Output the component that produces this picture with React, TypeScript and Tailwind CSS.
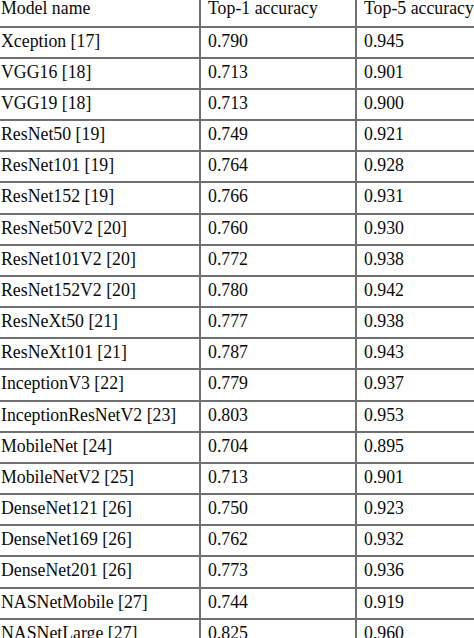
const rows: [string, string, string][] = [
  ["Xception [17]", "0.790", "0.945"],
  ["VGG16 [18]", "0.713", "0.901"],
  ["VGG19 [18]", "0.713", "0.900"],
  ["ResNet50 [19]", "0.749", "0.921"],
  ["ResNet101 [19]", "0.764", "0.928"],
  ["ResNet152 [19]", "0.766", "0.931"],
  ["ResNet50V2 [20]", "0.760", "0.930"],
  ["ResNet101V2 [20]", "0.772", "0.938"],
  ["ResNet152V2 [20]", "0.780", "0.942"],
  ["ResNeXt50 [21]", "0.777", "0.938"],
  ["ResNeXt101 [21]", "0.787", "0.943"],
  ["InceptionV3 [22]", "0.779", "0.937"],
  ["InceptionResNetV2 [23]", "0.803", "0.953"],
  ["MobileNet [24]", "0.704", "0.895"],
  ["MobileNetV2 [25]", "0.713", "0.901"],
  ["DenseNet121 [26]", "0.750", "0.923"],
  ["DenseNet169 [26]", "0.762", "0.932"],
  ["DenseNet201 [26]", "0.773", "0.936"],
  ["NASNetMobile [27]", "0.744", "0.919"],
  ["NASNetLarge [27]", "0.825", "0.960"],
]

export default function App() {
  return (
    <div
      className="w-[474px] h-[638px] overflow-hidden bg-white text-[#0a0a0a] text-[17.8px] leading-[20px]"
      style={{ fontFamily: '"Liberation Serif", "Times New Roman", serif' }}
    >
      {/* ヘッダー行（上端が少し切れている） */}
      <div className="flex h-[27.7px] border-b-2 border-[#707070] leading-[16px]">
        <div className="w-[201px] border-r-2 border-[#707070] pl-[1px] whitespace-nowrap">
          Model name
        </div>
        <div className="w-[156px] border-r-2 border-[#707070] pl-[7px] whitespace-nowrap">
          Top-1 accuracy
        </div>
        <div className="flex-1 pl-[7px] whitespace-nowrap">Top-5 accuracy</div>
      </div>

      {rows.map(([name, top1, top5]) => (
        <div key={name} className="flex h-[31.16px] border-b-2 border-[#707070]">
          <div className="w-[201px] border-r-2 border-[#707070] pl-[1px] pt-[3px] whitespace-nowrap">
            {name}
          </div>
          <div className="w-[156px] border-r-2 border-[#707070] pl-[7px] pt-[3px]">
            {top1}
          </div>
          <div className="flex-1 pl-[7px] pt-[3px]">{top5}</div>
        </div>
      ))}
    </div>
  )
}
